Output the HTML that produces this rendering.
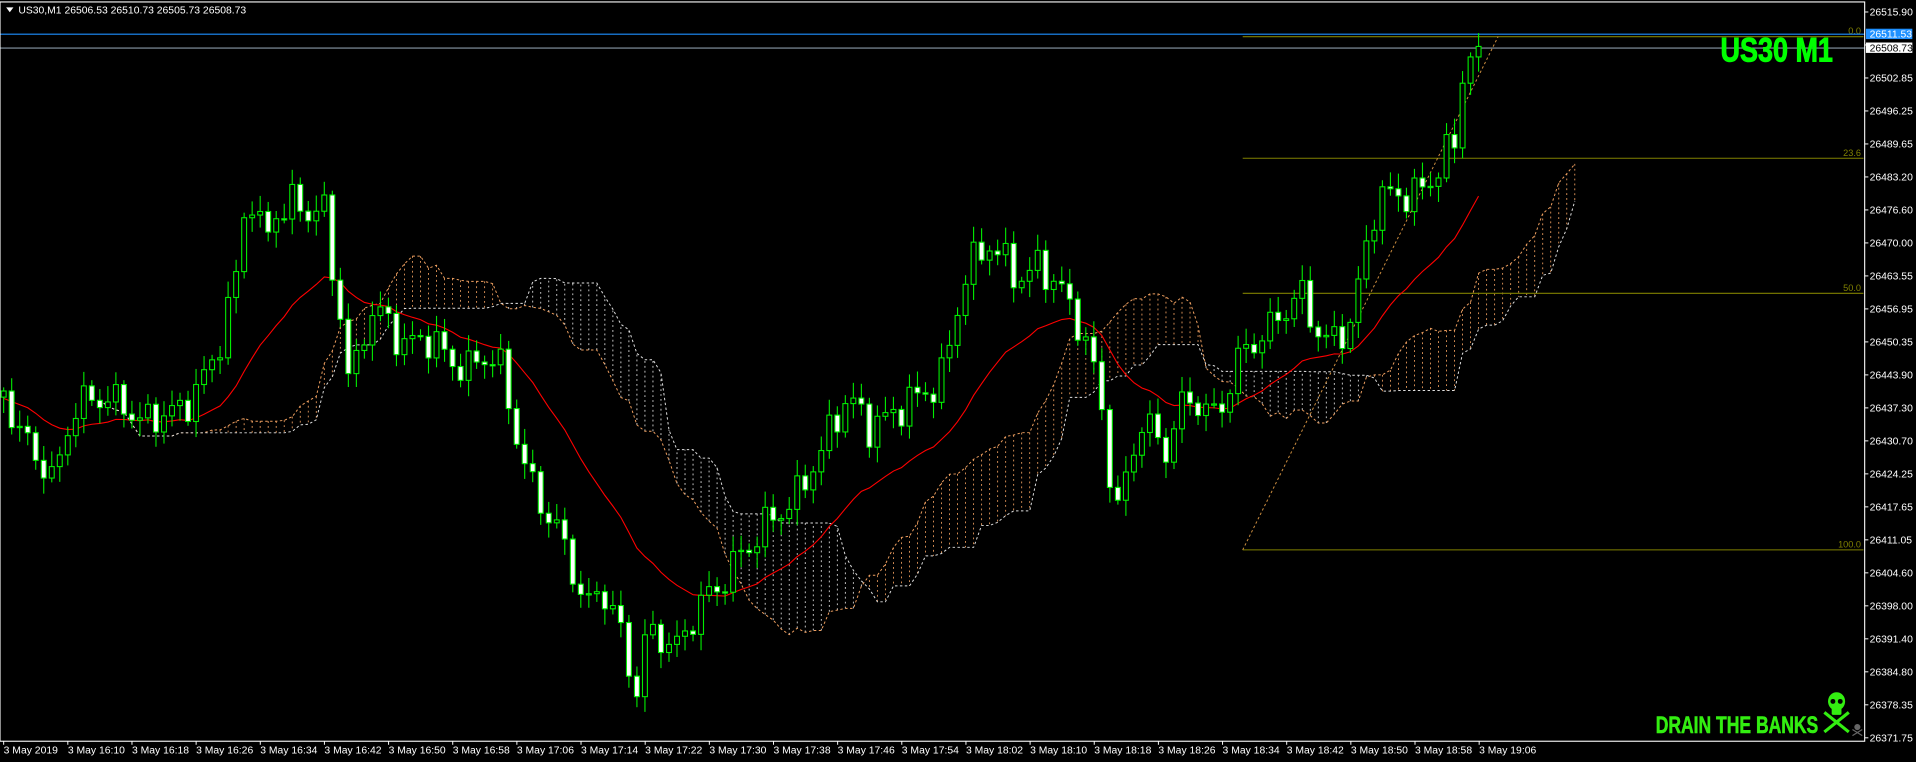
<!DOCTYPE html>
<html><head><meta charset="utf-8"><style>
html,body{margin:0;padding:0;background:#000;overflow:hidden}
svg{display:block}
text{font-family:"Liberation Sans",sans-serif}
</style></head><body>
<svg id="s" width="1916" height="762" viewBox="0 0 1568 623.6" xmlns="http://www.w3.org/2000/svg">
<rect width="1568" height="623.6" fill="#000"/>
<g id="cloud"></g>
<g id="fib">
<line x1="1017" y1="30" x2="1525" y2="30" stroke="#808000" stroke-width="0.9"/>
<line x1="1017" y1="129.5" x2="1525" y2="129.5" stroke="#808000" stroke-width="0.9"/>
<line x1="1017" y1="240" x2="1525" y2="240" stroke="#808000" stroke-width="0.9"/>
<line x1="1017" y1="450" x2="1525" y2="450" stroke="#808000" stroke-width="0.9"/>
<text x="1523" y="28" font-size="7.5" fill="#808000" text-anchor="end">0.0</text>
<text x="1523" y="127.5" font-size="7.5" fill="#808000" text-anchor="end">23.6</text>
<text x="1523" y="238" font-size="7.5" fill="#808000" text-anchor="end">50.0</text>
<text x="1523" y="448" font-size="7.5" fill="#808000" text-anchor="end">100.0</text>
<line x1="1017" y1="450" x2="1226" y2="30" stroke="#d09040" stroke-width="0.8" stroke-dasharray="2,2"/>
</g>
<line x1="0" y1="28" x2="1526" y2="28" stroke="#1e90ff" stroke-width="0.9"/>
<line x1="0" y1="39.3" x2="1526" y2="39.3" stroke="#8a9aa8" stroke-width="0.9"/>
<g id="ma"></g>
<g id="candles"></g>
<rect x="0" y="1.6" width="1526" height="605" fill="none" stroke="#fff" stroke-width="0.9"/>
<g id="axis"></g>
<rect x="1527" y="23.5" width="38" height="8.5" fill="#1e90ff"/>
<text x="1530" y="30.8" font-size="8.5" fill="#fff">26511.53</text>
<rect x="1527" y="34.8" width="38" height="8.5" fill="#fff"/>
<text x="1530" y="42" font-size="8.5" fill="#000">26508.73</text>
<path d="M5 6 L11 6 L8 10 Z" fill="#fff"/>
<text x="15" y="11" font-size="8.5" fill="#fff">US30,M1  26506.53 26510.73 26505.73 26508.73</text>
<text x="1408" y="50.5" font-size="28" font-weight="bold" fill="#00ff00" font-family="Liberation Sans Narrow, Liberation Sans, sans-serif" textLength="92" lengthAdjust="spacingAndGlyphs" stroke="#00ff00" stroke-width="0.8">US30 M1</text>
<text x="1355" y="600" font-size="20" font-weight="bold" fill="#33ee11" font-family="Liberation Sans Narrow, Liberation Sans, sans-serif" textLength="133" lengthAdjust="spacingAndGlyphs" stroke="#33ee11" stroke-width="0.5">DRAIN THE BANKS</text>
<g fill="#33ee11">
<ellipse cx="1503" cy="574" rx="7" ry="7.5"/>
<rect x="1499" y="578" width="8" height="7" rx="1"/>
<line x1="1493" y1="583" x2="1513" y2="599" stroke="#33ee11" stroke-width="2.6"/>
<line x1="1513" y1="583" x2="1493" y2="599" stroke="#33ee11" stroke-width="2.6"/>
<circle cx="1500" cy="574" r="2" fill="#000"/><circle cx="1506" cy="574" r="2" fill="#000"/>
</g>
<g fill="#666"><circle cx="1520" cy="595" r="2.5"/><line x1="1516" y1="597" x2="1524" y2="602" stroke="#666"/><line x1="1524" y1="597" x2="1516" y2="602" stroke="#666"/></g>
</svg>
<script>
var NS="http://www.w3.org/2000/svg";
function add(g,tag,at,txt){var e=document.createElementNS(NS,tag);for(var k in at)e.setAttribute(k,at[k]);if(txt)e.textContent=txt;document.getElementById(g).appendChild(e);return e;}
var K=[[3,320],[10,340],[20,360],[35,380],[45,395],[55,350],[65,330],[80,325],[100,330],[115,345],[130,340],[150,335],[160,320],[175,295],[185,260],[192,235],[200,175],[208,160],[215,200],[225,175],[235,170],[245,165],[255,180],[263,160],[270,205],[278,255],[288,330],[295,270],[310,255],[320,265],[330,285],[345,275],[360,285],[380,305],[395,290],[410,300],[420,345],[430,385],[440,405],[450,425],[460,440],[470,470],[480,500],[490,480],[500,495],[510,525],[520,570],[530,515],[545,525],[555,530],[565,510],[575,490],[585,485],[595,470],[605,455],[615,445],[630,425],[650,410],[660,390],[670,375],[680,350],[690,330],[700,330],[710,350],[720,345],[730,340],[740,330],[750,325],[760,320],[770,310],[780,270],[790,225],[800,210],[810,200],[820,210],[830,225],[840,228],[850,215],[860,228],[870,240],[880,258],[890,285],[900,320],[908,385],[915,420],[925,375],[935,345],[945,355],[955,370],[965,335],[975,325],[985,335],[995,340],[1005,320],[1015,290],[1025,280],[1035,275],[1045,260],[1055,250],[1065,240],[1075,265],[1085,280],[1095,275],[1105,265],[1115,220],[1122,180],[1130,160],[1145,160],[1160,158],[1170,150],[1180,130],[1190,120],[1198,60],[1207,38]];
function interp(x){for(var i=1;i<K.length;i++){if(x<=K[i][0]){var a=K[i-1],b=K[i];return a[1]+(b[1]-a[1])*(x-a[0])/(b[0]-a[0]);}}return K[K.length-1][1];}
var N=185,dx=6.56,C=[],O=[],H=[],L=[];
for(var i=0;i<N;i++){var x=3+i*dx;var c=interp(x)+(i<182?11*Math.sin(i*1.7)+6*Math.sin(i*3.1):0);C.push(c);}
for(var i=0;i<N;i++){var o=i?C[i-1]:C[0]+5;O.push(o);var t=Math.min(o,C[i]),b=Math.max(o,C[i]);H.push(t-3-Math.abs(10*Math.sin(i*2.3)));L.push(b+3+Math.abs(10*Math.cos(i*1.3)));}
function hl(i,p){var h=1e9,l=-1e9;for(var j=Math.max(0,i-p+1);j<=i;j++){h=Math.min(h,H[j]);l=Math.max(l,L[j]);}return (h+l)/2;}
var sh=12,A=[],B=[];
for(var i=0;i<N;i++){A.push((hl(i,9)+hl(i,18))/2);B.push(hl(i,30));}
var pa="",pb="";
for(var i=0;i<N;i++){var x=3+(i+sh)*dx;pa+=(i?"L":"M")+x.toFixed(1)+" "+A[i].toFixed(1);pb+=(i?"L":"M")+x.toFixed(1)+" "+B[i].toFixed(1);
 var col=A[i]<B[i]?"#f0a060":"#e0e0e0";add("cloud","line",{x1:x,y1:A[i],x2:x,y2:B[i],stroke:col,"stroke-width":0.7,"stroke-dasharray":"1.5,2.5"});}
add("cloud","path",{d:pa,fill:"none",stroke:"#f0a060","stroke-width":0.8,"stroke-dasharray":"2,2"});
add("cloud","path",{d:pb,fill:"none",stroke:"#e0e0e0","stroke-width":0.8,"stroke-dasharray":"2,2"});
var m=C[0],pm="";for(var i=0;i<N;i++){m=m+(C[i]-m)*2/22;pm+=(i?"L":"M")+(3+i*dx).toFixed(1)+" "+(m+6).toFixed(1);}
add("ma","path",{d:pm,fill:"none",stroke:"#ff0000","stroke-width":0.9});
for(var i=0;i<N;i++){var x=3+i*dx;var t=Math.min(O[i],C[i]),b=Math.max(O[i],C[i]);if(b-t<1)b=t+1;
 add("candles","line",{x1:x,y1:H[i],x2:x,y2:L[i],stroke:"#00ee00","stroke-width":0.9});
 add("candles","rect",{x:x-2,y:t,width:4,height:b-t,fill:(C[i]<O[i]?"#000":"#fff"),stroke:"#00ee00","stroke-width":0.9});}
var P=["26515.90","","26502.85","26496.25","26489.65","26483.20","26476.60","26470.00","26463.55","26456.95","26450.35","26443.90","26437.30","26430.70","26424.25","26417.65","26411.05","26404.60","26398.00","26391.40","26384.80","26378.35","26371.75"];
for(var k=0;k<P.length;k++){var y=9.8+k*27;add("axis","line",{x1:1526,y1:y,x2:1529,y2:y,stroke:"#fff","stroke-width":0.8});if(P[k])add("axis","text",{x:1530,y:y+3,"font-size":8.5,fill:"#fff"},P[k]);}
for(var k=0;k<24;k++){var x=3+k*52.5;var lab;if(k==0)lab="3 May 2019";else{var mm=16*60+10+(k-1)*8;var h=Math.floor(mm/60),mi=mm%60;lab="3 May "+h+":"+(mi<10?"0":"")+mi;}
 add("axis","line",{x1:x,y1:606.5,x2:x,y2:609.5,stroke:"#fff","stroke-width":0.8});add("axis","text",{x:x,y:616.5,"font-size":8.5,fill:"#fff"},lab);}
</script>
</body></html>
